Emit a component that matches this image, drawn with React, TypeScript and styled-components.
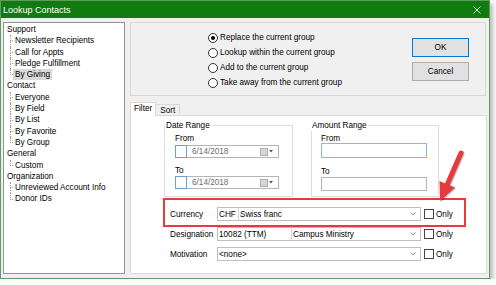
import { Fragment } from "react";
import styled, { createGlobalStyle } from "styled-components";

const GlobalStyle = createGlobalStyle`
	html, body {
		margin: 0;
		padding: 0;
		background: #fff;
	}
	body {
		font-family: "Liberation Sans", Arial, sans-serif;
		font-size: 8.2px;
		color: #000;
	}
	* {
		box-sizing: border-box;
	}
`;

const Window = styled.div`
	position: relative;
	width: 490px;
	height: 279px;
	border: 1px solid #5f9a5f;
	background-color: #f0f0f0;
	box-shadow: 3px 3px 5px rgba(0, 0, 0, 0.28);
	display: flex;
	flex-direction: column;
`;
const TitleBar = styled.div`
	height: 17px;
	flex: none;
	background-color: #107c10;
	color: #fff;
	font-size: 9px;
	display: flex;
	align-items: center;
	justify-content: space-between;
	padding: 0 8px 0 2px;
`;
const Body = styled.div`
	flex: 1;
	display: flex;
	gap: 5px;
	padding: 4px 2px 4px 2px;
	min-height: 0;
`;

const Tree = styled.div`
	width: 122px;
	flex: none;
	background-color: #fff;
	border: 1px solid #8e9299;
	padding-top: 1px;
`;
const RootRow = styled.div`
	height: 11.3px;
	line-height: 11.3px;
	padding-left: 3px;
	white-space: nowrap;
`;
const ChildRow = styled.div`
	height: 11.3px;
	line-height: 11.3px;
	margin-left: 6px;
	display: flex;
	white-space: nowrap;
`;
const Connector = styled.span`
	width: 3px;
	flex: none;
	display: flex;
	flex-direction: column;
`;
const ConnUpper = styled.span`
	flex: 1;
	border-left: 1px dotted #9a9a9a;
	border-bottom: 1px dotted #9a9a9a;
`;
const ConnLower = styled.span<{ $last: boolean }>`
	flex: 1;
	border-left: 1px dotted ${(p) => (p.$last ? "transparent" : "#9a9a9a")};
`;
const NodeLabel = styled.span<{ $selected: boolean }>`
	padding: 0 2px;
	background-color: ${(p) => (p.$selected ? "#d9d9d9" : "transparent")};
`;

const RightCol = styled.div`
	flex: 1;
	display: flex;
	flex-direction: column;
	min-width: 0;
`;
const TopPanel = styled.div`
	height: 74px;
	flex: none;
	border: 1px solid #d6d6d6;
	margin-right: 1px;
	display: flex;
	align-items: flex-start;
	padding: 7px 16px 0 77px;
`;
const RadioGroup = styled.div`
	flex: 1;
	display: flex;
	flex-direction: column;
`;
const RadioRow = styled.div`
	height: 15px;
	display: flex;
	align-items: center;
	gap: 2px;
`;
const RadioCircle = styled.span<{ $checked: boolean }>`
	width: 10px;
	height: 10px;
	border: 1px solid #333;
	border-radius: 50%;
	background-color: #fff;
	display: flex;
	align-items: center;
	justify-content: center;
	&::after {
		content: "";
		width: 4px;
		height: 4px;
		border-radius: 50%;
		background-color: ${(p) => (p.$checked ? "#000" : "transparent")};
	}
`;
const ButtonCol = styled.div`
	display: flex;
	flex-direction: column;
	gap: 5px;
	margin-top: 8px;
`;
const Button = styled.button<{ $primary?: boolean }>`
	width: 57px;
	height: 19px;
	padding: 0;
	font-family: inherit;
	font-size: 8.2px;
	color: #000;
	background-color: #e1e1e1;
	border: 1px solid ${(p) => (p.$primary ? "#0078d7" : "#adadad")};
`;

const TabStrip = styled.div`
	margin-top: 6px;
	height: 13px;
	display: flex;
	align-items: flex-end;
	flex: none;
`;
const Tab = styled.div<{ $active?: boolean }>`
	position: relative;
	z-index: 1;
	height: ${(p) => (p.$active ? "14px" : "11px")};
	margin-bottom: ${(p) => (p.$active ? "-1px" : "0")};
	line-height: ${(p) => (p.$active ? "12px" : "11px")};
	padding: 0 ${(p) => (p.$active ? "3px" : "4px")};
	background-color: ${(p) => (p.$active ? "#fff" : "#f0f0f0")};
	border: 1px solid #d9d9d9;
	border-bottom: none;
	border-left-width: ${(p) => (p.$active ? "1px" : "0")};
`;
const TabPanel = styled.div`
	flex: 1;
	background-color: #fff;
	border: 1px solid #d9d9d9;
	padding-top: 9px;
`;
const GroupRow = styled.div`
	display: flex;
	gap: 18px;
	padding-left: 33px;
`;
const Group = styled.div<{ $width: number; $inset: number }>`
	width: ${(p) => p.$width}px;
	height: 72px;
	border: 1px solid #dcdcdc;
	padding: 0 8px 0 ${(p) => p.$inset}px;
	display: flex;
	flex-direction: column;
	align-items: flex-start;
`;
const Legend = styled.span`
	margin: -6px 0 0 -10px;
	padding: 0 1px;
	line-height: 11px;
	background-color: #fff;
`;
const FieldLabel = styled.span<{ $gap: number }>`
	margin-top: ${(p) => p.$gap}px;
	line-height: 11px;
`;
const DateBox = styled.div<{ $top: number }>`
	margin-top: ${(p) => p.$top}px;
	width: 104px;
	height: 13px;
	border: 1px solid #b4b6bc;
	display: flex;
	align-items: center;
`;
const DateCheck = styled.span`
	width: 12px;
	height: 13px;
	margin: -1px 0 0 -1px;
	border: 1px solid #6f9fd0;
	background-color: #fff;
	flex: none;
`;
const DateText = styled.span`
	flex: 1;
	padding-left: 5px;
	color: #6d6d6d;
`;
const CalIcon = styled.span`
	display: flex;
	align-items: center;
	gap: 1px;
	margin-right: 5px;
`;
const TextBox = styled.div<{ $focused?: boolean }>`
	margin-top: ${(p) => (p.$focused ? "-1px" : "0")};
	width: 106px;
	height: ${(p) => (p.$focused ? "15px" : "14px")};
	border: 1px solid ${(p) => (p.$focused ? "#86b8e8" : "#b4b6bc")};
	background-color: #fff;
`;

const FieldGrid = styled.div`
	margin-top: 10px;
	padding-left: 39px;
	display: grid;
	grid-template-columns: 47px 204px auto;
	grid-auto-rows: 14px;
	row-gap: 6px;
	align-items: center;
`;
const Combo = styled.div`
	height: 14px;
	border: 1px solid #bcbec4;
	background-color: #fff;
	display: flex;
	align-items: center;
`;
const ComboCell = styled.span<{ $width?: number }>`
	height: 100%;
	display: flex;
	align-items: center;
	padding-left: 1px;
	width: ${(p) => (p.$width ? `${p.$width}px` : "auto")};
	flex: ${(p) => (p.$width ? "none" : "1")};
	border-right: ${(p) => (p.$width ? "1px solid #d4d4d4" : "none")};
	white-space: nowrap;
	overflow: hidden;
`;
const Chevron = styled.svg`
	margin-right: 4px;
	flex: none;
`;
const OnlyBox = styled.label`
	margin-left: 3px;
	display: flex;
	align-items: center;
	gap: 2px;
`;
const CheckSquare = styled.span`
	width: 10px;
	height: 10px;
	border: 1px solid #444;
	background-color: #fff;
`;

const Highlight = styled.div`
	position: absolute;
	left: 162px;
	top: 197px;
	width: 303px;
	height: 29px;
	border: 2px solid #e8393b;
	pointer-events: none;
`;
const ArrowLayer = styled.svg`
	position: absolute;
	left: -1px;
	top: -1px;
	pointer-events: none;
	overflow: visible;
`;

const tree = [
	{
		name: "Support",
		children: [
			"Newsletter Recipients",
			"Call for Appts",
			"Pledge Fulfillment",
			"By Giving",
		],
	},
	{
		name: "Contact",
		children: ["Everyone", "By Field", "By List", "By Favorite", "By Group"],
	},
	{ name: "General", children: ["Custom"] },
	{ name: "Organization", children: ["Unreviewed Account Info", "Donor IDs"] },
];

const radios = [
	"Replace the current group",
	"Lookup within the current group",
	"Add to the current group",
	"Take away from the current group",
];

const fields = [
	{ label: "Currency", cells: ["CHF", "Swiss franc"], width: 21 },
	{ label: "Designation", cells: ["10082 (TTM)", "Campus Ministry"], width: 74 },
	{ label: "Motivation", cells: ["<none>"], width: 0 },
];

function DateField({ top }: { top: number }) {
	return (
		<DateBox $top={top}>
			<DateCheck />
			<DateText>6/14/2018</DateText>
			<CalIcon>
				<svg width="8" height="8" viewBox="0 0 8 8">
					<rect x="0.5" y="0.5" width="7" height="7" fill="#e4e4e4" stroke="#a8a8a8" />
					<path d="M0.5 3H7.5M0.5 5.5H7.5M3 0.5V7.5M5.5 0.5V7.5" stroke="#c4c4c4" strokeWidth="0.6" />
				</svg>
				<svg width="4" height="3" viewBox="0 0 4 3">
					<path d="M0 0H4L2 2.5Z" fill="#555" />
				</svg>
			</CalIcon>
		</DateBox>
	);
}

export default function App() {
	return (
		<>
			<GlobalStyle />
			<Window>
				<TitleBar>
					<span>Lookup Contacts</span>
					<svg width="8" height="8" viewBox="0 0 8 8">
						<path d="M0.5 0.5L7.5 7.5M7.5 0.5L0.5 7.5" stroke="#fff" strokeWidth="0.8" />
					</svg>
				</TitleBar>
				<Body>
					<Tree>
						{tree.map((group) => (
							<div key={group.name}>
								<RootRow>{group.name}</RootRow>
								{group.children.map((child, i) => (
									<ChildRow key={child}>
										<Connector>
											<ConnUpper />
											<ConnLower $last={i === group.children.length - 1} />
										</Connector>
										<NodeLabel $selected={child === "By Giving"}>{child}</NodeLabel>
									</ChildRow>
								))}
							</div>
						))}
					</Tree>
					<RightCol>
						<TopPanel>
							<RadioGroup>
								{radios.map((r, i) => (
									<RadioRow key={r}>
										<RadioCircle $checked={i === 0} />
										<span>{r}</span>
									</RadioRow>
								))}
							</RadioGroup>
							<ButtonCol>
								<Button $primary>OK</Button>
								<Button>Cancel</Button>
							</ButtonCol>
						</TopPanel>
						<TabStrip>
							<Tab $active>Filter</Tab>
							<Tab>Sort</Tab>
						</TabStrip>
						<TabPanel>
							<GroupRow>
								<Group $width={129} $inset={10}>
									<Legend>Date Range</Legend>
									<FieldLabel $gap={2}>From</FieldLabel>
									<DateField top={1} />
									<FieldLabel $gap={7}>To</FieldLabel>
									<DateField top={0} />
								</Group>
								<Group $width={128} $inset={9}>
									<Legend>Amount Range</Legend>
									<FieldLabel $gap={2}>From</FieldLabel>
									<TextBox $focused />
									<FieldLabel $gap={8}>To</FieldLabel>
									<TextBox />
								</Group>
							</GroupRow>
							<FieldGrid>
								{fields.map((f) => (
									<Fragment key={f.label}>
										<span>{f.label}</span>
										<Combo>
											{f.cells.map((c, i) => (
												<ComboCell
													key={c}
													$width={i === 0 && f.cells.length > 1 ? f.width : undefined}
												>
													{c}
												</ComboCell>
											))}
											<Chevron width="6" height="4" viewBox="0 0 6 4">
												<path d="M0.5 0.5L3 3L5.5 0.5" fill="none" stroke="#777" strokeWidth="0.8" />
											</Chevron>
										</Combo>
										<OnlyBox>
											<CheckSquare />
											<span>Only</span>
										</OnlyBox>
									</Fragment>
								))}
							</FieldGrid>
						</TabPanel>
					</RightCol>
				</Body>
				<Highlight />
				<ArrowLayer width="490" height="279" viewBox="0 0 490 279">
					<g transform="translate(1 1)" opacity="0.25">
						<line x1="461" y1="153" x2="447" y2="185" stroke="#000" strokeWidth="5" strokeLinecap="round" />
						<path d="M455 187.5L439.5 181L440 201Z" fill="#000" />
					</g>
					<line x1="461" y1="153" x2="447" y2="185" stroke="#e8393b" strokeWidth="5" strokeLinecap="round" />
					<path d="M455 187.5L439.5 181L440 201Z" fill="#e8393b" />
				</ArrowLayer>
			</Window>
		</>
	);
}
